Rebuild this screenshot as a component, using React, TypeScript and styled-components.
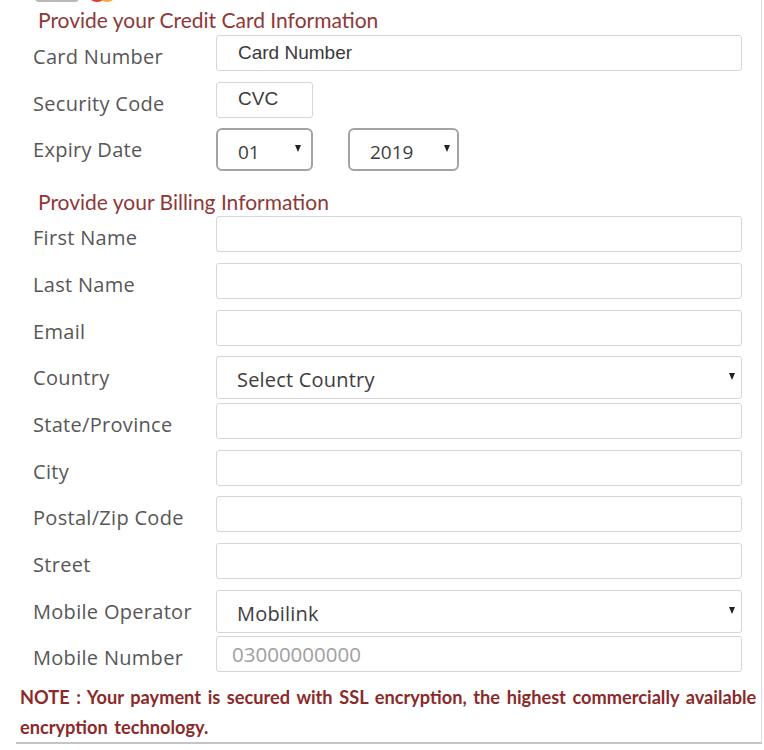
import React from "react";
import styled, { createGlobalStyle } from "styled-components";

const Global = createGlobalStyle`
  html, body { margin: 0; padding: 0; background: #ffffff; }
  body { width: 764px; height: 750px; overflow: hidden; }
`;

const Panel = styled.div`
  margin-left: 16px;
  width: 745px;
  height: 742px;
  border-right: 1px solid #dcdcdc;
  border-bottom: 2px solid #c4c4c4;
  box-sizing: content-box;
  display: flex;
  flex-direction: column;
  overflow: hidden;
`;

const LogoRow = styled.div`
  display: flex;
  align-items: flex-end;
  gap: 8px;
  height: 30px;
  margin-top: -26px;
  padding-left: 19px;
`;

const CardLogo = styled.div`
  width: 44px;
  height: 28px;
  border: 2px solid #b8b8b8;
  border-radius: 4px;
  background: #f4f4f4;
  box-sizing: border-box;
`;

const McLogo = styled.svg`
  width: 30px;
  height: 28px;
  display: block;
`;

const SectionTitle = styled.div<{ $top: number; $bottom: number }>`
  margin: ${(p) => p.$top}px 0 ${(p) => p.$bottom}px 22px;
  font-family: Lato, "Open Sans", sans-serif;
  font-size: 21px;
  line-height: 24px;
  color: #8e3838;
  white-space: nowrap;
`;

const Rows = styled.div`
  display: flex;
  flex-direction: column;
  gap: 10.67px;
`;

const Row = styled.div`
  display: grid;
  grid-template-columns: 200px 1fr;
  height: 36px;
  align-items: start;
`;

const Label = styled.div`
  padding: 10px 0 0 17px;
  font-family: "Open Sans", sans-serif;
  font-size: 20px;
  letter-spacing: 0.3px;
  line-height: 24px;
  color: #575757;
  white-space: nowrap;
`;

const Fields = styled.div`
  display: flex;
  gap: 35px;
  align-items: start;
`;

const TextInput = styled.input<{ $w?: number; $mono?: boolean }>`
  box-sizing: border-box;
  width: ${(p) => (p.$w ? `${p.$w}px` : "526px")};
  height: 36px;
  margin: 0;
  padding: 0 0 1px ${(p) => (p.$mono ? 15 : 21)}px;
  border: 1.5px solid #d6d6d6;
  border-radius: 3px;
  background: #ffffff;
  font-family: ${(p) => (p.$mono ? `"Open Sans", sans-serif` : `"Liberation Sans", Arial, sans-serif`)};
  font-size: ${(p) => (p.$mono ? 20.5 : 19)}px;
  color: #3a3a3a;
  outline: none;
  &::placeholder {
    color: ${(p) => (p.$mono ? "#a0a0a0" : "#3a3a3a")};
    opacity: 1;
  }
`;

const SelectWrap = styled.div<{ $w?: number }>`
  position: relative;
  width: ${(p) => (p.$w ? `${p.$w}px` : "526px")};
  height: 43px;
`;

const Select = styled.select<{ $boxed?: boolean }>`
  appearance: none;
  -webkit-appearance: none;
  box-sizing: border-box;
  width: 100%;
  height: 43px;
  margin: 0;
  padding: 4px 0 0 20px;
  border: ${(p) => (p.$boxed ? "2px solid #a3a3a3" : "1.5px solid #d6d6d6")};
  border-radius: ${(p) => (p.$boxed ? "6px" : "3px")};
  background: #ffffff;
  font-family: "Open Sans", sans-serif;
  font-size: ${(p) => (p.$boxed ? 19 : 20)}px;
  letter-spacing: ${(p) => (p.$boxed ? 0 : 0.2)}px;
  color: #3d3d3d;
  outline: none;
`;

const Arrow = styled.span<{ $right: number }>`
  position: absolute;
  top: 17px;
  right: ${(p) => p.$right}px;
  width: 0;
  height: 0;
  border-left: 3.5px solid transparent;
  border-right: 3.5px solid transparent;
  border-top: 7px solid #222222;
  pointer-events: none;
`;

const Note = styled.p`
  margin: 10px 0 0 4px;
  font-family: Lato, "Open Sans", sans-serif;
  font-weight: 700;
  font-size: 18.2px;
  line-height: 30px;
  color: #8a2a2a;
  word-spacing: 2.2px;
`;

const months = ["01", "02", "03", "04", "05", "06", "07", "08", "09", "10", "11", "12"];
const years = ["2019", "2020", "2021", "2022", "2023", "2024", "2025"];

type FieldDef = { label: string; kind: "text" | "select"; placeholder?: string; value?: string; muted?: boolean };

const billing: FieldDef[] = [
  { label: "First Name", kind: "text" },
  { label: "Last Name", kind: "text" },
  { label: "Email", kind: "text" },
  { label: "Country", kind: "select", value: "Select Country" },
  { label: "State/Province", kind: "text" },
  { label: "City", kind: "text" },
  { label: "Postal/Zip Code", kind: "text" },
  { label: "Street", kind: "text" },
  { label: "Mobile Operator", kind: "select", value: "Mobilink" },
  { label: "Mobile Number", kind: "text", placeholder: "03000000000", muted: true },
];

export default function App() {
  return (
    <>
      <Global />
      <Panel>
        <LogoRow>
          <CardLogo />
          <McLogo viewBox="0 0 30 28">
            <circle cx="10" cy="18" r="10" fill="#e8343a" />
            <circle cx="20" cy="18" r="10" fill="#f6a623" opacity="0.95" />
          </McLogo>
        </LogoRow>

        <SectionTitle $top={6} $bottom={3}>Provide your Credit Card Information</SectionTitle>
        <Rows>
          <Row>
            <Label>Card Number</Label>
            <TextInput placeholder="Card Number" />
          </Row>
          <Row>
            <Label>Security Code</Label>
            <TextInput $w={97} placeholder="CVC" />
          </Row>
          <Row>
            <Label>Expiry Date</Label>
            <Fields>
              <SelectWrap $w={97}>
                <Select $boxed defaultValue="01">
                  {months.map((m) => (
                    <option key={m}>{m}</option>
                  ))}
                </Select>
                <Arrow $right={12} />
              </SelectWrap>
              <SelectWrap $w={111}>
                <Select $boxed defaultValue="2019">
                  {years.map((y) => (
                    <option key={y}>{y}</option>
                  ))}
                </Select>
                <Arrow $right={9} />
              </SelectWrap>
            </Fields>
          </Row>
        </Rows>

        <SectionTitle $top={26} $bottom={2}>Provide your Billing Information</SectionTitle>
        <Rows>
          {billing.map((f) => (
            <Row key={f.label}>
              <Label>{f.label}</Label>
              {f.kind === "select" ? (
                <SelectWrap>
                  <Select defaultValue={f.value}>
                    <option>{f.value}</option>
                  </Select>
                  <Arrow $right={7} />
                </SelectWrap>
              ) : (
                <TextInput $mono={f.muted} placeholder={f.placeholder} />
              )}
            </Row>
          ))}
        </Rows>

        <Note>
          NOTE : Your payment is secured with SSL encryption, the highest commercially available encryption technology.
        </Note>
      </Panel>
    </>
  );
}
